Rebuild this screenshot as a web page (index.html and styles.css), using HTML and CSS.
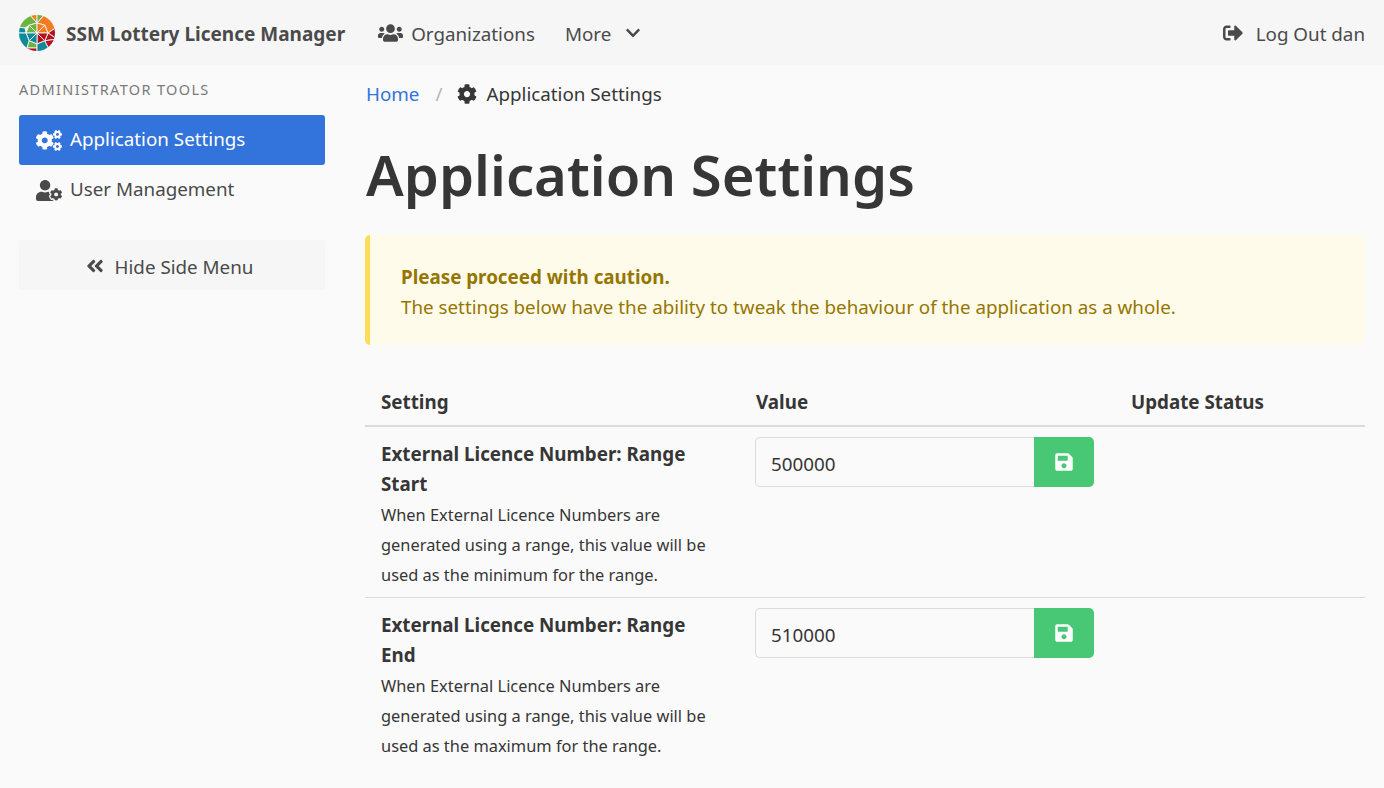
FILE: index.html
```html
<!DOCTYPE html>
<html lang="en">
<head>
    <meta charset="UTF-8">
    <title>Application Settings</title>
    <link rel="stylesheet" href="styles.css">
</head>
<body>
    <!-- Top navigation -->
    <nav class="navbar">
        <a class="brand" href="#">
            <svg class="logo" viewBox="0 0 36 36">
                <clipPath id="logo-clip"><circle cx="18" cy="18" r="18"/></clipPath>
                <g clip-path="url(#logo-clip)" stroke="#f6f6f6" stroke-width="0.9">
                    <path fill="#f47b20" d="M18 8V-2H9Z"/>
                    <path fill="#6cb33f" d="M9-2 18 8 10.2 10.2 6 13-2 12V-2Z"/>
                    <path fill="#0f8a9d" d="M-2 12 6 13 7 18H-2Z"/>
                    <path fill="#6cb33f" d="M18-2H27L18 8Z"/>
                    <path fill="#f47b20" d="M27-2 38 12 29 18 25.8 10.2 18 8Z"/>
                    <path fill="#b5121b" d="M38 12V24L29 18Z"/>
                    <path fill="#b5121b" d="M29 18 38 24 25.8 25.8Z"/>
                    <path fill="#6cb33f" d="M18 18V8L10.2 10.2Z"/>
                    <path fill="#6cb33f" d="M18 18 10.2 10.2 7 18Z"/>
                    <path fill="#f47b20" d="M18 18V8L25.8 10.2Z"/>
                    <path fill="#f47b20" d="M18 18 25.8 10.2 29 18Z"/>
                    <path fill="#b5121b" d="M18 18H29L25.8 25.8Z"/>
                    <path fill="#b5121b" d="M18 18 25.8 25.8 18 29Z"/>
                    <path fill="#0f8a9d" d="M18 18V29L10.2 25.8Z"/>
                    <path fill="#0f8a9d" d="M18 18 10.2 25.8 7 18Z"/>
                    <path fill="#0f8a9d" d="M-2 18H7L10.2 25.8 8 33V38H-2Z"/>
                    <path fill="#6cb33f" d="M10.2 25.8 18 29V33H8Z"/>
                    <path fill="#b5121b" d="M8 33H18V38H8Z"/>
                    <path fill="#0f8a9d" d="M18 29 25.8 25.8 32 38H18Z"/>
                    <path fill="#b5121b" d="M25.8 25.8 38 24V38H32Z"/>
                </g>
            </svg>
            <span>SSM Lottery Licence Manager</span>
        </a>
        <a class="nav-item" href="#">
            <svg class="icon icon-users" viewBox="0 0 640 512"><path d="M96 224c35.3 0 64-28.7 64-64s-28.7-64-64-64-64 28.7-64 64 28.7 64 64 64zm448 0c35.3 0 64-28.7 64-64s-28.7-64-64-64-64 28.7-64 64 28.7 64 64 64zm32 32h-64c-17.6 0-33.5 7.1-45.1 18.6 40.3 22.1 68.9 62 75.1 109.4h66c17.7 0 32-14.3 32-32v-32c0-35.3-28.7-64-64-64zm-256 0c61.9 0 112-50.1 112-112S381.9 32 320 32 208 82.1 208 144s50.1 112 112 112zm76.8 32h-8.3c-20.8 10-43.9 16-68.5 16s-47.6-6-68.5-16h-8.3C179.6 288 128 339.6 128 403.2V432c0 26.5 21.5 48 48 48h288c26.5 0 48-21.5 48-48v-28.8c0-63.6-51.6-115.2-115.2-115.2zm-223.7-13.4C161.5 263.1 145.6 256 128 256H64c-35.3 0-64 28.7-64 64v32c0 17.7 14.3 32 32 32h65.9c6.3-47.4 34.9-87.3 75.2-109.4z"/></svg>
            <span>Organizations</span>
        </a>
        <a class="nav-item nav-more" href="#">
            <span>More</span>
            <svg class="icon icon-chevron" viewBox="0 0 448 512"><path d="M207.029 381.476L12.686 187.132c-9.373-9.373-9.373-24.569 0-33.941l22.667-22.667c9.357-9.357 24.522-9.375 33.901-.04L224 284.505l154.745-154.021c9.379-9.335 24.544-9.317 33.901.04l22.667 22.667c9.373 9.373 9.373 24.569 0 33.941L240.971 381.476c-9.373 9.372-24.569 9.372-33.942 0z"/></svg>
        </a>
        <a class="nav-item nav-end" href="#">
            <svg class="icon icon-signout" viewBox="0 0 512 512"><path d="M497 273L329 441c-15 15-41 4.5-41-17v-96H152c-13.3 0-24-10.7-24-24v-96c0-13.3 10.7-24 24-24h136V88c0-21.4 25.9-32 41-17l168 168c9.3 9.4 9.3 24.6 0 34zM192 436v-40c0-6.6-5.4-12-12-12H96c-17.7 0-32-14.3-32-32V160c0-17.7 14.3-32 32-32h84c6.6 0 12-5.4 12-12V76c0-6.6-5.4-12-12-12H96c-53 0-96 43-96 96v192c0 53 43 96 96 96h84c6.6 0 12-5.4 12-12z"/></svg>
            <span>Log Out dan</span>
        </a>
    </nav>

    <div class="layout">
        <!-- Side menu -->
        <aside class="sidebar">
            <p class="menu-label">ADMINISTRATOR TOOLS</p>
            <a class="menu-link is-active" href="#">
                <svg class="icon icon-menu" viewBox="0 0 640 512"><path d="M512.1 191l-8.2 14.3c-3 5.3-9.4 7.5-15.1 5.4-11.8-4.4-22.6-10.7-32.1-18.6-4.6-3.8-5.8-10.5-2.8-15.7l8.2-14.3c-6.9-8-12.3-17.3-15.9-27.4h-16.5c-6 0-11.2-4.3-12.2-10.3-2-12-2.1-24.6 0-37.1 1-6 6.2-10.4 12.2-10.4h16.5c3.6-10.1 9-19.4 15.9-27.4l-8.2-14.3c-3-5.2-1.9-11.9 2.8-15.7 9.5-7.9 20.4-14.2 32.1-18.6 5.7-2.1 12.1.1 15.1 5.4l8.2 14.3c10.5-1.9 21.2-1.9 31.7 0L552 6.3c3-5.3 9.4-7.5 15.1-5.4 11.8 4.4 22.6 10.7 32.1 18.6 4.6 3.8 5.8 10.5 2.8 15.7l-8.2 14.3c6.9 8 12.3 17.3 15.9 27.4h16.5c6 0 11.2 4.3 12.2 10.3 2 12 2.1 24.6 0 37.1-1 6-6.2 10.4-12.2 10.4h-16.5c-3.6 10.1-9 19.4-15.9 27.4l8.2 14.3c3 5.2 1.9 11.9-2.8 15.7-9.5 7.9-20.4 14.2-32.1 18.6-5.7 2.1-12.1-.1-15.1-5.4l-8.2-14.3c-10.4 1.9-21.2 1.9-31.7 0zm-10.5-58.8c38.5 29.6 82.4-14.3 52.8-52.8-38.5-29.7-82.4 14.3-52.8 52.8zM386.3 286.1l33.7 16.8c10.1 5.8 14.5 18.1 10.5 29.1-8.9 24.2-26.4 46.4-42.6 65.8-7.4 8.9-20.2 11.1-30.3 5.3l-29.1-16.8c-16 13.7-34.6 24.6-54.9 31.7v33.6c0 11.6-8.3 21.6-19.7 23.6-24.6 4.2-50.4 4.4-75.9 0-11.5-2-20-11.9-20-23.6V418c-20.3-7.2-38.9-18-54.9-31.7L74 403c-10 5.8-22.9 3.6-30.3-5.3-16.2-19.4-33.3-41.6-42.2-65.7-4-10.9.4-23.2 10.5-29.1l33.3-16.8c-3.9-20.9-3.9-42.4 0-63.4L12 205.8c-10.1-5.8-14.6-18.1-10.5-29 8.9-24.2 26-46.4 42.2-65.8 7.4-8.9 20.2-11.1 30.3-5.3l29.1 16.8c16-13.7 34.6-24.6 54.9-31.7V57.1c0-11.5 8.2-21.5 19.6-23.5 24.6-4.2 50.5-4.4 76-.1 11.5 2 20 11.9 20 23.6v33.6c20.3 7.2 38.9 18 54.9 31.7l29.1-16.8c10-5.8 22.9-3.6 30.3 5.3 16.2 19.4 33.2 41.6 42.1 65.8 4 10.9.1 23.2-10 29.1l-33.7 16.8c3.9 21 3.9 42.5 0 63.5zm-117.6 21.1c59.2-77-28.7-164.9-105.7-105.7-59.2 77 28.7 164.9 105.7 105.7zm243.4 182.7l-8.2 14.3c-3 5.3-9.4 7.5-15.1 5.4-11.8-4.4-22.6-10.7-32.1-18.6-4.6-3.8-5.8-10.5-2.8-15.7l8.2-14.3c-6.9-8-12.3-17.3-15.9-27.4h-16.5c-6 0-11.2-4.3-12.2-10.3-2-12-2.1-24.6 0-37.1 1-6 6.2-10.4 12.2-10.4h16.5c3.6-10.1 9-19.4 15.9-27.4l-8.2-14.3c-3-5.2-1.9-11.9 2.8-15.7 9.5-7.9 20.4-14.2 32.1-18.6 5.7-2.1 12.1.1 15.1 5.4l8.2 14.3c10.5-1.9 21.2-1.9 31.7 0l8.2-14.3c3-5.3 9.4-7.5 15.1-5.4 11.8 4.4 22.6 10.7 32.1 18.6 4.6 3.8 5.8 10.5 2.8 15.7l-8.2 14.3c6.9 8 12.3 17.3 15.9 27.4h16.5c6 0 11.2 4.3 12.2 10.3 2 12 2.1 24.6 0 37.1-1 6-6.2 10.4-12.2 10.4h-16.5c-3.6 10.1-9 19.4-15.9 27.4l8.2 14.3c3 5.2 1.9 11.9-2.8 15.7-9.5 7.9-20.4 14.2-32.1 18.6-5.7 2.1-12.1-.1-15.1-5.4l-8.2-14.3c-10.4 1.9-21.2 1.9-31.7 0zM501.6 431c38.5 29.6 82.4-14.3 52.8-52.8-38.5-29.6-82.4 14.3-52.8 52.8z"/></svg>
                <span>Application Settings</span>
            </a>
            <a class="menu-link" href="#">
                <svg class="icon icon-menu" viewBox="0 0 640 512"><path d="M610.5 373.3c2.6-14.1 2.6-28.5 0-42.6l25.8-14.9c3-1.7 4.3-5.2 3.3-8.5-6.7-21.6-18.2-41.2-33.2-57.4-2.3-2.5-6-3.1-9-1.4l-25.8 14.9c-10.9-9.3-23.4-16.5-36.9-21.3v-29.8c0-3.4-2.4-6.4-5.7-7.1-22.3-5-45-4.8-66.2 0-3.3.7-5.7 3.7-5.7 7.1v29.8c-13.5 4.8-26 12-36.9 21.3l-25.8-14.9c-2.9-1.7-6.7-1.1-9 1.4-15 16.2-26.5 35.8-33.2 57.4-1 3.3.4 6.8 3.3 8.5l25.8 14.9c-2.6 14.1-2.6 28.5 0 42.6l-25.8 14.9c-3 1.7-4.3 5.2-3.3 8.5 6.7 21.6 18.2 41.1 33.2 57.4 2.3 2.5 6 3.1 9 1.4l25.8-14.9c10.9 9.3 23.4 16.5 36.9 21.3v29.8c0 3.4 2.4 6.4 5.7 7.1 22.3 5 45 4.8 66.2 0 3.3-.7 5.7-3.7 5.7-7.1v-29.8c13.5-4.8 26-12 36.9-21.3l25.8 14.9c2.9 1.7 6.7 1.1 9-1.4 15-16.2 26.5-35.8 33.2-57.4 1-3.3-.4-6.8-3.3-8.5l-25.8-14.9zM496 400.5c-26.8 0-48.5-21.8-48.5-48.5s21.8-48.5 48.5-48.5 48.5 21.8 48.5 48.5-21.7 48.5-48.5 48.5zM224 256c70.7 0 128-57.3 128-128S294.7 0 224 0 96 57.3 96 128s57.3 128 128 128zm201.2 226.5c-2.3-1.2-4.6-2.6-6.8-3.9l-7.9 4.6c-6 3.4-12.8 5.3-19.6 5.3-10.9 0-21.4-4.6-28.9-12.6-18.3-19.8-32.3-43.9-40.2-69.6-5.5-17.7 1.9-36.4 17.9-45.7l7.9-4.6c-.1-2.6-.1-5.2 0-7.8l-7.9-4.6c-16-9.2-23.4-28-17.9-45.7.9-2.9 2.2-5.8 3.2-8.7-3.8-.3-7.5-1.2-11.4-1.2h-16.7c-22.2 10.2-46.9 16-72.9 16s-50.6-5.8-72.9-16h-16.7C60.2 288 0 348.2 0 422.4V464c0 26.5 21.5 48 48 48h352c10.1 0 19.5-3.2 27.2-8.5-1.2-3.8-2-7.7-2-11.8v-9.2z"/></svg>
                <span>User Management</span>
            </a>
            <button class="hide-btn" type="button">
                <svg class="icon icon-angles" viewBox="0 0 448 512"><path d="M223.7 239l136-136c9.4-9.4 24.6-9.4 33.9 0l22.6 22.6c9.4 9.4 9.4 24.6 0 33.9L319.9 256l96.4 96.4c9.4 9.4 9.4 24.6 0 33.9L393.7 409c-9.4 9.4-24.6 9.4-33.9 0l-136-136c-9.5-9.4-9.5-24.6-.1-34zm-192 34l136 136c9.4 9.4 24.6 9.4 33.9 0l22.6-22.6c9.4-9.4 9.4-24.6 0-33.9L127.9 256l96.4-96.4c9.4-9.4 9.4-24.6 0-33.9L201.7 103c-9.4-9.4-24.6-9.4-33.9 0l-136 136c-9.5 9.4-9.5 24.6-.1 34z"/></svg>
                <span>Hide Side Menu</span>
            </button>
        </aside>

        <!-- Main content -->
        <main class="content">
            <div class="breadcrumb">
                <a href="#">Home</a>
                <span class="crumb-sep">/</span>
                <svg class="icon icon-cog" viewBox="0 0 512 512"><path d="M487.4 315.7l-42.6-24.6c4.3-23.2 4.3-47 0-70.2l42.6-24.6c4.9-2.8 7.1-8.6 5.5-14-11.1-35.6-30-67.8-54.7-94.6-3.8-4.1-10-5.1-14.8-2.3L380.8 110c-17.9-15.4-38.5-27.3-60.8-35.1V25.8c0-5.6-3.9-10.5-9.4-11.7-36.7-8.2-74.3-7.8-109.2 0-5.5 1.2-9.4 6.1-9.4 11.7V75c-22.2 7.9-42.8 19.8-60.8 35.1L88.7 85.5c-4.9-2.8-11-1.9-14.8 2.3-24.7 26.7-43.6 58.9-54.7 94.6-1.7 5.4.6 11.2 5.5 14L67.3 221c-4.3 23.2-4.3 47 0 70.2l-42.6 24.6c-4.9 2.8-7.1 8.6-5.5 14 11.1 35.6 30 67.8 54.7 94.6 3.8 4.1 10 5.1 14.8 2.3l42.6-24.6c17.9 15.4 38.5 27.3 60.8 35.1v49.2c0 5.6 3.9 10.5 9.4 11.7 36.7 8.2 74.3 7.8 109.2 0 5.5-1.2 9.4-6.1 9.4-11.7v-49.2c22.2-7.9 42.8-19.8 60.8-35.1l42.6 24.6c4.9 2.8 11 1.9 14.8-2.3 24.7-26.7 43.6-58.9 54.7-94.6 1.5-5.5-.7-11.3-5.6-14.1zM256 336c-44.1 0-80-35.9-80-80s35.9-80 80-80 80 35.9 80 80-35.9 80-80 80z"/></svg>
                <span class="crumb-current">Application Settings</span>
            </div>

            <h1 class="title">Application Settings</h1>

            <div class="message">
                <strong>Please proceed with caution.</strong><br>
                The settings below have the ability to tweak the behaviour of the application as a whole.
            </div>

            <table class="settings">
                <colgroup>
                    <col class="col-setting">
                    <col class="col-value">
                    <col class="col-status">
                </colgroup>
                <thead>
                    <tr>
                        <th>Setting</th>
                        <th>Value</th>
                        <th>Update Status</th>
                    </tr>
                </thead>
                <tbody>
                    <tr>
                        <td class="setting-cell">
                            <strong>External Licence Number: Range Start</strong>
                            <p class="help">When External Licence Numbers are generated using a range, this value will be used as the minimum for the range.</p>
                        </td>
                        <td>
                            <div class="field">
                                <input class="input" type="text" value="500000">
                                <button class="save-btn" type="button">
                                    <svg class="icon icon-save" viewBox="0 0 448 512"><path d="M433.941 129.941l-83.882-83.882A48 48 0 0 0 316.118 32H48C21.49 32 0 53.49 0 80v352c0 26.51 21.49 48 48 48h352c26.51 0 48-21.49 48-48V163.882a48 48 0 0 0-14.059-33.941zM224 416c-35.346 0-64-28.654-64-64 0-35.346 28.654-64 64-64s64 28.654 64 64c0 35.346-28.654 64-64 64zm96-304.52V212c0 6.627-5.373 12-12 12H76c-6.627 0-12-5.373-12-12V108c0-6.627 5.373-12 12-12h228.52c3.183 0 6.235 1.264 8.485 3.515l3.48 3.48A11.996 11.996 0 0 1 320 111.48z"/></svg>
                                </button>
                            </div>
                        </td>
                        <td></td>
                    </tr>
                    <tr>
                        <td class="setting-cell">
                            <strong>External Licence Number: Range End</strong>
                            <p class="help">When External Licence Numbers are generated using a range, this value will be used as the maximum for the range.</p>
                        </td>
                        <td>
                            <div class="field">
                                <input class="input" type="text" value="510000">
                                <button class="save-btn" type="button">
                                    <svg class="icon icon-save" viewBox="0 0 448 512"><path d="M433.941 129.941l-83.882-83.882A48 48 0 0 0 316.118 32H48C21.49 32 0 53.49 0 80v352c0 26.51 21.49 48 48 48h352c26.51 0 48-21.49 48-48V163.882a48 48 0 0 0-14.059-33.941zM224 416c-35.346 0-64-28.654-64-64 0-35.346 28.654-64 64-64s64 28.654 64 64c0 35.346-28.654 64-64 64zm96-304.52V212c0 6.627-5.373 12-12 12H76c-6.627 0-12-5.373-12-12V108c0-6.627 5.373-12 12-12h228.52c3.183 0 6.235 1.264 8.485 3.515l3.48 3.48A11.996 11.996 0 0 1 320 111.48z"/></svg>
                                </button>
                            </div>
                        </td>
                        <td></td>
                    </tr>
                </tbody>
            </table>
        </main>
    </div>
</body>
</html>
```

FILE: styles.css
```css
body {
    margin: 0;
    background-color: #fafafa;
    color: #363636;
    font-family: "Noto Sans", sans-serif;
    font-size: 18.8px;
    line-height: 30px;
    overflow: hidden;
}
a {
    color: inherit;
    text-decoration: none;
}
.icon {
    fill: currentColor;
    flex-shrink: 0;
}
.navbar {
    display: flex;
    align-items: center;
    height: 65px;
    background-color: #f6f6f6;
    color: #4a4a4a;
}
.navbar span {
    margin-top: 2px;
}
.brand {
    display: flex;
    align-items: center;
    margin-left: 19px;
    font-size: 19px;
    font-weight: 700;
}
.logo {
    width: 36px;
    height: 36px;
    margin-right: 11px;
}
.nav-item {
    display: flex;
    align-items: center;
}
.brand + .nav-item {
    margin-left: 33px;
}
.nav-more {
    margin-left: 30px;
}
.nav-end {
    margin-left: auto;
    margin-right: 19px;
}
.icon-users {
    width: 25px;
    height: 20px;
    margin-right: 8px;
}
.icon-chevron {
    width: 14px;
    height: 16px;
    margin-left: 15px;
}
.icon-signout {
    width: 20px;
    height: 20px;
    margin-right: 13px;
}
.layout {
    display: flex;
}
.sidebar {
    width: 306px;
    margin-left: 19px;
    flex-shrink: 0;
}
.menu-label {
    margin: 9px 0 11px;
    color: #7a7a7a;
    font-size: 14.5px;
    letter-spacing: 1.35px;
}
.menu-link {
    display: flex;
    align-items: center;
    height: 50px;
    padding-left: 17px;
    border-radius: 3px;
    color: #4a4a4a;
}
.menu-link span {
    margin-top: -2px;
}
.menu-link.is-active {
    background-color: #3273dc;
    color: #fff;
}
.icon-menu {
    width: 26px;
    height: 21px;
    margin-right: 8px;
}
.hide-btn {
    display: flex;
    align-items: center;
    justify-content: center;
    box-sizing: border-box;
    width: 100%;
    height: 50px;
    margin-top: 25px;
    padding: 2px 5px 0 0;
    border: 0;
    border-radius: 3px;
    background-color: #f6f6f6;
    color: #4a4a4a;
    font: inherit;
}
.hide-btn span {
    margin-top: 2px;
}
.icon-angles {
    width: 18px;
    height: 20px;
    margin-right: 11px;
}
.content {
    width: 1000px;
    margin-left: 40px;
}
.breadcrumb {
    display: flex;
    align-items: center;
    height: 30px;
    margin: 14px 0 0 1px;
}
.breadcrumb a {
    color: #3273dc;
}
.crumb-sep {
    margin: 0 15px 0 16px;
    color: #b5b5b5;
}
.icon-cog {
    width: 20px;
    height: 20px;
    margin-right: 9px;
}
.title {
    margin: 32px 0 28px 1px;
    font-size: 56.2px;
    font-weight: 600;
    line-height: 66px;
}
.message {
    box-sizing: border-box;
    height: 110px;
    padding: 27px 31px;
    border-left: 5px solid #ffdd57;
    border-radius: 5px;
    background-color: #fffbeb;
    color: #947600;
}
.settings {
    width: 100%;
    margin-top: 25px;
    border-collapse: collapse;
    table-layout: fixed;
}
.col-setting,
.col-value {
    width: 375px;
}
.settings th {
    padding: 17px 16px 8px;
    border-bottom: 2px solid #dbdbdb;
    text-align: left;
    font-weight: 700;
}
.settings td {
    padding: 10px 15px 8px;
    border-bottom: 1px solid #dbdbdb;
    vertical-align: top;
}
.settings .setting-cell {
    padding: 12px 16px 7px;
}
.settings tbody tr:last-child td {
    border-bottom: 0;
}
.help {
    margin: 1px 0 0;
    font-size: 16.4px;
}
.field {
    display: flex;
    width: 339px;
}
.input {
    box-sizing: border-box;
    width: 279px;
    height: 50px;
    padding: 4px 15px 0;
    border: 1px solid #dbdbdb;
    border-right: 0;
    border-radius: 5px 0 0 5px;
    outline: 0;
    background-color: #fafafa;
    color: #363636;
    font: inherit;
}
.save-btn {
    display: flex;
    align-items: center;
    justify-content: center;
    width: 60px;
    height: 50px;
    padding: 0;
    border: 0;
    border-radius: 0 5px 5px 0;
    background-color: #48c774;
    color: #fff;
}
.icon-save {
    width: 18px;
    height: 20px;
}
```
